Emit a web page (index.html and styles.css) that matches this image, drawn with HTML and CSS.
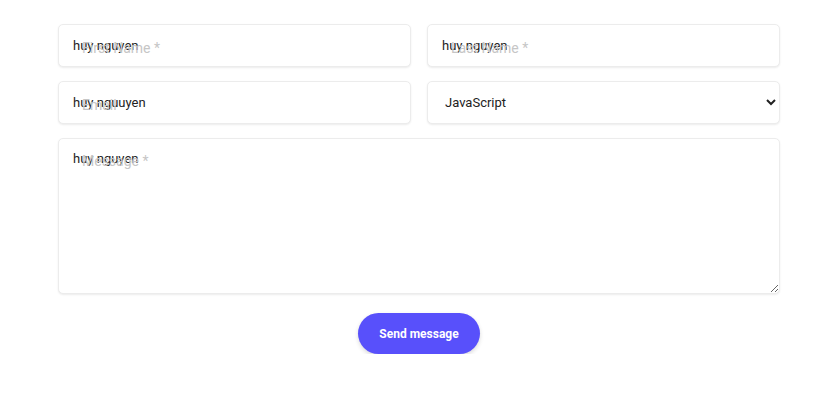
FILE: index.html
```html
<!DOCTYPE html>
<html>
<head>
<meta charset="utf-8">
<link rel="stylesheet" href="styles.css">
</head>
<body>
<form class="form">
  <div class="row">
    <div class="field">
      <input class="control" type="text" value="huy nguyen">
      <label class="label">First Name *</label>
    </div>
    <div class="field">
      <input class="control" type="text" value="huy nguyen">
      <label class="label">Last Name *</label>
    </div>
  </div>
  <div class="row">
    <div class="field">
      <input class="control" type="text" value="huy nguuyen">
      <label class="label">Email</label>
    </div>
    <div class="field">
      <select class="control select">
        <option>JavaScript</option>
      </select>
    </div>
  </div>
  <div class="field">
    <textarea class="control area">huy nguyen</textarea>
    <label class="label label-top">Message *</label>
  </div>
  <div class="actions">
    <button type="button" class="btn">Send message</button>
  </div>
</form>
</body>
</html>
```

FILE: styles.css
```css
html, body {
  margin: 0;
  padding: 0;
  background: #fff;
}
body {
  font-family: Roboto, "Liberation Sans", sans-serif;
}
.form {
  width: 722px;
  margin: 0 0 0 58px;
  padding-top: 24px;
  display: flex;
  flex-direction: column;
  gap: 14px;
}
.row {
  display: grid;
  grid-template-columns: 353px 353px;
  column-gap: 16px;
}
.field {
  position: relative;
}
.control {
  box-sizing: border-box;
  width: 100%;
  height: 43px;
  border: 1px solid #ececec;
  border-radius: 5px;
  box-shadow: 0 1px 2px rgba(0,0,0,0.08);
  background: #fff;
  font-family: Roboto, "Liberation Sans", sans-serif;
  font-size: 13px;
  color: #222;
  padding: 0 14px;
  outline: none;
  display: block;
  margin: 0;
}
.select {
  padding-left: 13px;
  padding-right: 6px;
}
.area {
  height: 156px;
  padding: 12px 14px;
  resize: vertical;
}
.label {
  position: absolute;
  left: 24px;
  top: 16px;
  font-size: 14px;
  color: #c6c6c6;
  pointer-events: none;
  line-height: 16px;
}
.label-top {
  top: 15px;
}
.actions {
  display: flex;
  justify-content: center;
  padding-top: 5px;
}
.btn {
  width: 122px;
  height: 41px;
  border: none;
  border-radius: 21px;
  background: #5850fb;
  color: #fff;
  font-family: Roboto, "Liberation Sans", sans-serif;
  font-weight: 700;
  font-size: 12px;
  box-shadow: 0 2px 4px rgba(0,0,0,0.15);
  cursor: pointer;
}
```
